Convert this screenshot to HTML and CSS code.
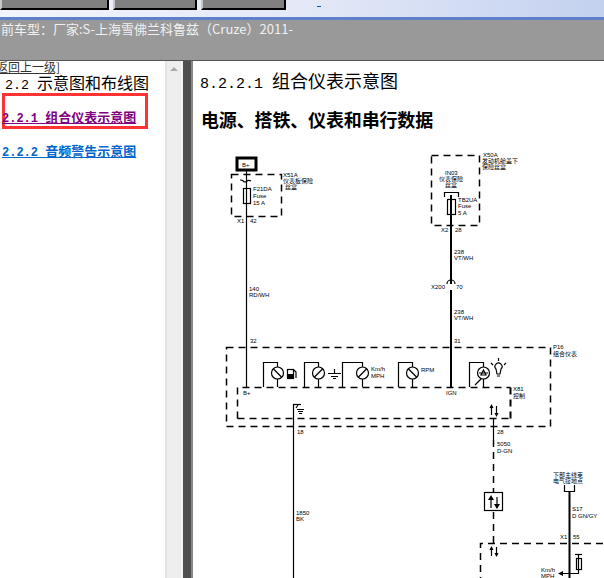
FILE: index.html
```html
<!DOCTYPE html>
<html lang="zh-CN">

<head>
  <meta charset="UTF-8">
  <title>组合仪表示意图</title>
  <link rel="stylesheet" href="styles.css">
</head>

<body>
  <div class="toolbar">
    <div class="tool-btn btn-a"></div>
    <div class="tool-btn btn-b"></div>
    <div class="tool-btn btn-c"></div>
    <div class="tool-dash"></div>
  </div>
  <div class="car-bar">当前车型：厂家:S-上海雪佛兰科鲁兹（Cruze）2011-</div>

  <div class="main">
    <div class="side">
      <div class="side-list">
        <a class="back-link">[返回上一级]</a>
        <div class="side-title"><span class="num">2.2 </span>示意图和布线图</div>
        <div class="active-box"><a class="side-link visited"><span class="num-b">2.2.1 </span>组合仪表示意图</a></div>
        <a class="side-link second"><span class="num-b">2.2.2 </span>音频警告示意图</a>
      </div>
      <div class="scrollbar"><div class="arrow-up"></div></div>
    </div>
    <div class="divider"></div>
    <div class="content">
      <div class="page-title"><span class="num-big">8.2.2.1 </span>组合仪表示意图</div>
      <div class="page-sub">电源、搭铁、仪表和串行数据</div>

      <!-- 电路图，viewBox 用整页坐标 -->
      <svg class="diagram" viewBox="193 140 411 438" width="411" height="438">
        <!-- 点线框 -->
        <g class="dash">
          <rect x="231.5" y="174.5" width="50" height="42"/>
          <rect x="431.5" y="155.5" width="48" height="70"/>
          <rect x="226.5" y="347.5" width="324" height="79"/>
          <path d="M237.5 418.5V387.5H510.5"/>
          <path d="M237.5 418.5H510"/>
          <path class="dash-thick" d="M510.5 387.5V418.5"/>
          <path d="M480.5 620V543.5H604"/>
          <path d="M493.5 440V543"/>
        </g>

        <!-- 导线 -->
        <g class="wire">
          <path d="M246.5 171V387"/>
          <path d="M293.5 404V578"/>
          <path d="M293 404.5H301"/>
          <path d="M493.5 418V440"/>
          <path d="M578.5 554V573.5H563"/>
          <path d="M240 180c4 0 3 2 5 2s2-3 6-1"/>
        </g>
        <g class="wire-thick">
          <path d="M451 195V284"/>
          <path d="M451 290V387"/>
          <path d="M569.5 492V578"/>
        </g>

        <!-- B+ -->
        <rect class="bplus" x="237" y="158" width="19" height="12"/>
        <text class="lb" x="242" y="167">B+</text>

        <!-- 保险丝 -->
        <g class="wire">
          <rect x="243.5" y="188.5" width="7" height="15"/>
          <rect x="447.5" y="199.5" width="8" height="15"/>
          <path d="M444.5 197V192.5H458.5V197"/>
          <path d="M564.5 485V491.5H574.5V485"/>
          <rect x="576.5" y="558.5" width="5" height="11"/>
          <path d="M575 554.5H582"/>
          <path d="M447 284a4 4 0 0 1 8 0"/>
        </g>
        <path class="fill" d="M558 573.5l5-2.500v5z"/>

        <!-- 仪表 -->
        <g class="wire">
          <path d="M263.500 387V362.500H277.500V367"/>
          <path d="M277.500 379V387"/>
          <circle cx="277.500" cy="373" r="6"/>
          <path d="M273.500 369l8 8"/>
          <path d="M304.500 387V362.500H318.500V367"/>
          <path d="M318.500 379V387"/>
          <circle cx="318.500" cy="373" r="6"/>
          <path d="M314.500 377l8-8"/>
          <path d="M342.500 387V362.500H362.500V367"/>
          <path d="M362.500 379V387"/>
          <circle cx="362.500" cy="373" r="6"/>
          <path d="M358.500 377l8-8"/>
          <path d="M398.500 387V362.500H412.500V367"/>
          <path d="M412.500 379V387"/>
          <circle cx="412.500" cy="373" r="6"/>
          <path d="M408.500 369l8 8"/>
          <path d="M469.500 387V362.500H483.500V367"/>
          <path d="M483.500 379V387"/>
          <circle cx="483.500" cy="373" r="6"/>
          <path d="M479 373H488M483.500 370l-2.500 5h5zM475 385l6-6"/>
          <!-- 搭铁符号 -->
          <path d="M328 373.500H341M334.500 369V373M331 376.500H338M333 378.500H336"/>
          <path d="M297 409.500H304M298 411.500H303M299 413.500H302"/>
          <path d="M296 408l2-3"/>
          <!-- 灯泡 -->
          <path d="M496 369a3.500 3.500 0 1 1 5 0l-1 5h-3zM497 376h3M493 365l-2-2M504 365l2-2M498.500 361v-3"/>
          <!-- 燃油 -->
          <rect x="287.500" y="369.500" width="6" height="9"/>
          <path d="M294 370l2 2v6"/>
        </g>
        <rect class="fill" x="288" y="374" width="5" height="5"/>

        <!-- 双向箭头 -->
        <g class="wire">
          <path d="M491.500 406V415M496.500 406V415"/>
          <rect x="484.500" y="492.500" width="18" height="18" class="white"/>
          <path d="M491 497V508M497 497V508"/>
          <path d="M491.500 547V556M496.500 547V556"/>
        </g>
        <path class="fill" d="M491.500 404l-2 4h4zM496.500 417l-2-4h4zM491 495l-3 5h6zM497 509l-3-5h6zM491.500 546l-2 4h4zM496.500 557l-2-4h4z"/>

        <!-- 标注 -->
        <text class="lb" x="253" y="191">F21DA</text>
        <text class="lb" x="253" y="198">Fuse</text>
        <text class="lb" x="253" y="205">15 A</text>
        <text class="lb" x="283" y="177">X51A</text>
        <text class="lb" x="283" y="183">仪表板保险</text>
        <text class="lb" x="285" y="189">丝盒</text>
        <text class="lb" x="237" y="223">X1</text>
        <text class="lb" x="250" y="223">42</text>
        <text class="lb" x="249" y="291">140</text>
        <text class="lb" x="249" y="297">RD/WH</text>
        <text class="lb" x="250" y="343">32</text>

        <text class="lb" x="445" y="175">IN03</text>
        <text class="lb" x="439" y="181">仪表保险</text>
        <text class="lb" x="445" y="187">丝盒</text>
        <text class="lb" x="458" y="202">TB2UA</text>
        <text class="lb" x="458" y="208">Fuse</text>
        <text class="lb" x="458" y="215">5 A</text>
        <text class="lb" x="483" y="157">X50A</text>
        <text class="lb" x="482" y="163">发动机舱盖下</text>
        <text class="lb" x="482" y="169">保险丝盒</text>
        <text class="lb" x="441" y="232">X2</text>
        <text class="lb" x="455" y="232">28</text>
        <text class="lb" x="454" y="254">238</text>
        <text class="lb" x="454" y="260">VT/WH</text>
        <text class="lb" x="431" y="289">X200</text>
        <text class="lb" x="456" y="289">70</text>
        <text class="lb" x="454" y="314">238</text>
        <text class="lb" x="454" y="320">VT/WH</text>
        <text class="lb" x="454" y="343">31</text>

        <text class="lb" x="371" y="371">Km/h</text>
        <text class="lb" x="371" y="378">MPH</text>
        <text class="lb" x="421" y="372">RPM</text>
        <text class="lb" x="243" y="395">B+</text>
        <text class="lb" x="446" y="395">IGN</text>
        <text class="lb" x="553" y="349">P16</text>
        <text class="lb" x="553" y="356">组合仪表</text>
        <text class="lb" x="513" y="391">X81</text>
        <text class="lb" x="513" y="398">控制</text>
        <text class="lb" x="297" y="434">18</text>
        <text class="lb" x="497" y="434">28</text>
        <text class="lb" x="497" y="446">5050</text>
        <text class="lb" x="497" y="453">D-GN</text>
        <text class="lb" x="296" y="515">1850</text>
        <text class="lb" x="296" y="521">BK</text>
        <text class="lb" x="553" y="477">下部主线束</text>
        <text class="lb" x="553" y="483">电气接地点</text>
        <text class="lb" x="572" y="511">S17</text>
        <text class="lb" x="572" y="518">D GN/GY</text>
        <text class="lb" x="560" y="539">X1</text>
        <text class="lb" x="573" y="539">55</text>
        <text class="lb" x="541" y="572">Km/h</text>
        <text class="lb" x="541" y="578">MPH</text>
      </svg>
    </div>
  </div>
</body>

</html>
```
FILE: styles.css
```css
* {
  margin: 0;
  padding: 0;
  box-sizing: border-box;
}

body {
  width: 604px;
  height: 578px;
  overflow: hidden;
  background: #fff;
  font-family: "Noto Sans CJK SC", "Liberation Sans", sans-serif;
  color: #000;
}

.toolbar {
  display: flex;
  height: 20px;
  position: relative;
  background: linear-gradient(90deg, #f2f4fb 0%, #e4e9f7 50%, #c3d1ef 100%);
  border-bottom: 3px solid #5f80c8;
}

.tool-btn {
  height: 10px;
  background: #808080;
  border-bottom: 2px solid #000;
  border-right: 2px solid #000;
  border-left: 2px solid #c8c8c8;
  flex: none;
}

.btn-a {
  width: 109px;
}

.btn-b {
  width: 84px;
  margin-left: 4px;
}

.btn-c {
  width: 85px;
  margin-left: 4px;
}

.tool-dash {
  position: absolute;
  left: 317px;
  top: 6px;
  width: 4px;
  height: 1px;
  background: #0050c0;
}

.car-bar {
  height: 41px;
  background: #999;
  border-bottom: 1px solid #555;
  color: #f0f0f0;
  font-size: 13px;
  line-height: 16px;
  padding-top: 1px;
  text-indent: -12px;
  white-space: nowrap;
  overflow: hidden;
}

.main {
  display: flex;
  height: 517px;
}

.side {
  display: flex;
  width: 183px;
  flex: none;
}

.side-list {
  width: 165px;
  flex: none;
  overflow: hidden;
}

.back-link {
  display: block;
  height: 12px;
  margin-left: -8px;
  font-size: 12px;
  line-height: 12px;
  color: #333;
  text-decoration: underline;
  white-space: nowrap;
}

.side-title {
  height: 20px;
  margin-top: -1px;
  padding-left: 5px;
  font-size: 16px;
  line-height: 20px;
  white-space: pre;
}

.num {
  font-family: "Liberation Mono", monospace;
  font-size: 13.33px;
}

.num-b {
  font-family: "Liberation Mono", monospace;
  font-size: 12px;
  font-weight: 700;
}

.num-big {
  font-family: "Liberation Mono", monospace;
  font-size: 15px;
}

.active-box {
  width: 146px;
  height: 36px;
  margin: 1px 0 0 2px;
  padding-top: 7px;
  border: 3px solid #f33;
}

.side-link {
  display: inline-block;
  font-size: 13px;
  font-weight: 700;
  line-height: 16px;
  text-decoration: underline;
  color: #06c;
  white-space: pre;
}

.active-box .side-link {
  margin-left: -3px;
}

.visited {
  color: #800080;
}

.second {
  margin: 14px 0 0 2px;
}

.scrollbar {
  width: 18px;
  flex: none;
  background: #eee;
  border-left: 2px solid #e2e2e2;
  border-right: 2px solid #f6f6f6;
  padding: 6px 0 0 3px;
}

.arrow-up {
  width: 0;
  height: 0;
  border-left: 4px solid transparent;
  border-right: 4px solid transparent;
  border-bottom: 4px solid #aaa;
}

.divider {
  width: 10px;
  flex: none;
  background: #505050;
  border-right: 2px solid #888;
}

.content {
  flex: 1;
  overflow: hidden;
  position: relative;
}

.page-title {
  padding: 8px 0 0 7px;
  font-size: 18px;
  line-height: 22px;
  white-space: pre;
}

.page-sub {
  padding: 12px 0 0 8px;
  font-size: 18px;
  font-weight: 700;
  letter-spacing: -0.15px;
  line-height: 22px;
  white-space: pre;
}

.diagram {
  display: block;
  margin-top: 10px;
}

.dash {
  fill: none;
  stroke: #000;
  stroke-width: 1.5;
  stroke-dasharray: 7 5;
}

.dash-thick {
  stroke-width: 2;
}

.wire {
  fill: none;
  stroke: #000;
  stroke-width: 1.2;
}

.wire-thick {
  fill: none;
  stroke: #000;
  stroke-width: 2;
}

.white {
  fill: #fff;
}

.fill {
  fill: #000;
}

.bplus {
  fill: #fff;
  stroke: #000;
  stroke-width: 3;
}

.lb {
  font-family: "Liberation Sans", "Noto Sans CJK SC", sans-serif;
  font-size: 6px;
  fill: #000;
}
```
